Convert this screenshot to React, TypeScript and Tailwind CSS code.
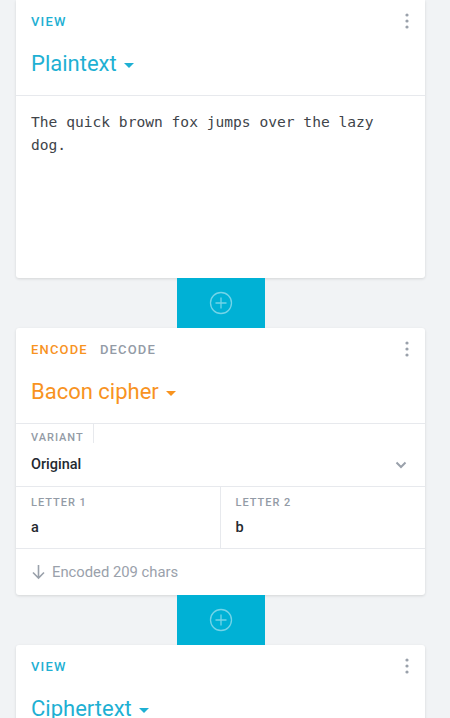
import React from "react";

const Kebab = () => (
  <svg width="4" height="16" viewBox="0 0 4 16" className="text-[#9aa1ab]">
    <circle cx="2" cy="2" r="1.6" fill="currentColor" />
    <circle cx="2" cy="8" r="1.6" fill="currentColor" />
    <circle cx="2" cy="14" r="1.6" fill="currentColor" />
  </svg>
);

const Caret = ({ color }: { color: string }) => (
  <svg width="10" height="5" viewBox="0 0 10 5" className="ml-[7px] mt-[2px]">
    <path d="M0 0 L10 0 L5 5 Z" fill={color} />
  </svg>
);

const AddButton = () => (
  <div className="flex justify-center">
    <div className="w-[88px] h-[50px] bg-[#00b1d5] flex items-center justify-center">
      <svg width="24" height="24" viewBox="0 0 24 24" fill="none" stroke="rgba(255,255,255,0.45)" strokeWidth="1.3">
        <circle cx="12" cy="12" r="10.5" />
        <path d="M12 6.5v11M6.5 12h11" />
      </svg>
    </div>
  </div>
);

const Header = ({
  tabs,
  title,
  color,
}: {
  tabs: { label: string; active: boolean }[];
  title: string;
  color: string;
}) => (
  <div className="h-[96px] border-b border-[#e7e9ed] px-[15px] relative">
    <div className="flex items-center h-[44px] gap-[12px]">
      {tabs.map((t) => (
        <span
          key={t.label}
          className="text-[13px] font-medium tracking-[0.09em]"
          style={{ color: t.active ? color : "#939ba6" }}
        >
          {t.label}
        </span>
      ))}
    </div>
    <div className="absolute right-[16px] top-[13px]">
      <Kebab />
    </div>
    <div className="flex items-center h-[40px]">
      <span className="text-[22px] leading-none" style={{ color }}>
        {title}
      </span>
      <Caret color={color} />
    </div>
  </div>
);

export default function App() {
  const cyan = "#1eb0d3";
  const orange = "#f8931f";
  return (
    <div
      className="w-[450px] h-[718px] overflow-hidden bg-[#f1f3f5] pl-[16px]"
      style={{ fontFamily: "Roboto, 'Noto Sans', sans-serif" }}
    >
      <div className="w-[409px]">
        <div className="bg-white rounded-b-[3px] shadow-[0_1px_3px_rgba(0,0,0,0.12)] h-[278px] flex flex-col">
          <Header tabs={[{ label: "VIEW", active: true }]} title="Plaintext" color={cyan} />
          <div
            className="px-[15px] pt-[14px] text-[14.6px] leading-[23px] text-[#40444a]"
            style={{ fontFamily: "'DejaVu Sans Mono', monospace" }}
          >
            The quick brown fox jumps over the lazy
            <br />
            dog.
          </div>
        </div>

        <AddButton />

        <div className="bg-white rounded-[3px] shadow-[0_1px_3px_rgba(0,0,0,0.12)]">
          <Header
            tabs={[
              { label: "ENCODE", active: true },
              { label: "DECODE", active: false },
            ]}
            title="Bacon cipher"
            color={orange}
          />
          <div className="h-[63px] border-b border-[#e7e9ed] relative">
            <div className="flex">
              <div className="w-[63px] h-[19px] ml-[15px] border-r border-[#e7e9ed] flex items-end">
                <span className="text-[11px] font-medium tracking-[0.09em] text-[#939ba6] leading-none">
                  VARIANT
                </span>
              </div>
            </div>
            <div className="px-[15px] mt-[11px] flex items-center justify-between">
              <span className="text-[14.5px] font-medium text-[#24292f]">Original</span>
              <svg width="12" height="8" viewBox="0 0 12 8" className="mr-[3px]">
                <path d="M1.5 1.5 L6 6 L10.5 1.5" stroke="#9aa1ab" strokeWidth="2" fill="none" />
              </svg>
            </div>
          </div>
          <div className="grid grid-cols-2 h-[62px] border-b border-[#e7e9ed]">
            <div className="border-r border-[#e7e9ed] px-[15px] pt-[9px]">
              <div className="text-[11px] font-medium tracking-[0.09em] text-[#939ba6] leading-[14px]">
                LETTER 1
              </div>
              <div className="text-[14.5px] font-medium text-[#24292f] mt-[10px] leading-[16px]">a</div>
            </div>
            <div className="px-[15px] pt-[9px]">
              <div className="text-[11px] font-medium tracking-[0.09em] text-[#939ba6] leading-[14px]">
                LETTER 2
              </div>
              <div className="text-[14.5px] font-medium text-[#24292f] mt-[10px] leading-[16px]">b</div>
            </div>
          </div>
          <div className="h-[46px] flex items-center px-[16px] gap-[7px]">
            <svg width="13" height="16" viewBox="0 0 13 16" fill="none" stroke="#9aa1ab" strokeWidth="1.6">
              <path d="M6.5 1v13M1 8.5 L6.5 14 L12 8.5" />
            </svg>
            <span className="text-[14.8px] text-[#9aa1ab]">Encoded 209 chars</span>
          </div>
        </div>

        <AddButton />

        <div className="bg-white rounded-t-[3px] shadow-[0_1px_3px_rgba(0,0,0,0.12)] h-[200px]">
          <Header tabs={[{ label: "VIEW", active: true }]} title="Ciphertext" color={cyan} />
        </div>
      </div>
    </div>
  );
}
